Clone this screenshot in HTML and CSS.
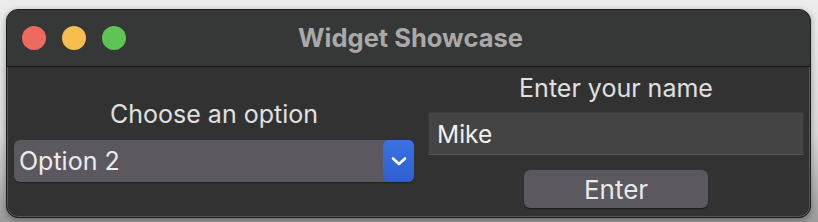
FILE: index.html
```html
<!DOCTYPE html>
<html lang="en">
<head>
    <meta charset="UTF-8">
    <meta name="viewport" content="width=device-width, initial-scale=1.0">
    <title>Widget Showcase</title>
    <link rel="stylesheet" href="styles.css">
</head>
<body>
    <div class="window">
        <div class="titlebar">
            <div class="lights">
                <span class="light red"></span>
                <span class="light yellow"></span>
                <span class="light green"></span>
            </div>
            <div class="title">Widget Showcase</div>
        </div>

        <div class="content">
            <div class="column left">
                <div class="label">Choose an option</div>
                <div class="select">
                    <span class="select-text">Option 2</span>
                    <span class="select-arrow">
                        <svg width="18" height="11" viewBox="0 0 18 11">
                            <path d="M3 2.5 L9 8 L15 2.5" fill="none" stroke="#fff" stroke-width="2.6" stroke-linecap="round" stroke-linejoin="round"/>
                        </svg>
                    </span>
                </div>
            </div>

            <div class="column right">
                <div class="label">Enter your name</div>
                <input type="text" class="name-input" value="Mike">
                <button class="enter-btn">Enter</button>
            </div>
        </div>
    </div>
</body>
</html>
```

FILE: styles.css
```css
html, body {
    height: 100%;
}
body {
    margin: 0;
    padding: 9px 7px 6px 6px;
    box-sizing: border-box;
    font-family: 'Inter', 'Liberation Sans', sans-serif;
    background: linear-gradient(#ececec, #d8d8d8 60%, #9a9a9a);
}
.window {
    height: 207px;
    display: flex;
    flex-direction: column;
    background-color: #323232;
    border: 1px solid #1e1e1e;
    border-radius: 12px;
    box-shadow: inset 0 0 0 1px #555, 0 2px 6px rgba(0,0,0,0.35);
    overflow: hidden;
}
.titlebar {
    position: relative;
    height: 56px;
    flex: none;
    display: flex;
    align-items: center;
    justify-content: center;
    background-color: #363737;
    border-bottom: 1px solid #141414;
}
.lights {
    position: absolute;
    left: 15px;
    top: 16px;
    display: flex;
    gap: 16px;
}
.light {
    width: 24px;
    height: 24px;
    border-radius: 50%;
}
.red { background-color: #ee6a5f; }
.yellow { background-color: #f5be4f; }
.green { background-color: #5ec454; }
.title {
    color: #a9a9a9;
    font-weight: bold;
    font-size: 25.5px;
    margin-left: 4px;
    margin-top: -2px;
}
.content {
    flex: 1;
    display: grid;
    grid-template-columns: 400px 376px;
    column-gap: 14px;
    align-items: center;
    padding: 0 6px 0 7px;
}
.column {
    display: flex;
    flex-direction: column;
    align-items: center;
}
.label {
    color: #e0e0e0;
    font-size: 25px;
    line-height: 24px;
}
.left .label {
    margin-bottom: 14px;
}
.right .label {
    margin-bottom: 12px;
}
.select {
    width: 100%;
    height: 42px;
    display: flex;
    align-items: center;
    background-color: #5b5860;
    border-radius: 6px;
    box-shadow: 0 1px 1px rgba(0,0,0,0.4);
}
.select-text {
    flex: 1;
    color: #ececec;
    font-size: 25px;
    padding-left: 5px;
}
.select-arrow {
    width: 31px;
    height: 42px;
    display: flex;
    align-items: center;
    justify-content: center;
    background: linear-gradient(#3b72e4, #2f5fd0);
    border-radius: 6px;
}
.name-input {
    width: 100%;
    height: 43px;
    box-sizing: border-box;
    background-color: #444444;
    border: 1px solid #3a3a3a;
    border-bottom-color: #585858;
    color: #f0f0f0;
    font-family: inherit;
    font-size: 24.5px;
    padding: 0 8px;
    outline: none;
}
.enter-btn {
    width: 184px;
    height: 38px;
    margin-top: 15px;
    background-color: #5b5860;
    border: none;
    border-radius: 6px;
    box-shadow: 0 1px 1px rgba(0,0,0,0.5);
    color: #e8e8e8;
    font-family: inherit;
    font-size: 26px;
    padding: 0;
}
```
